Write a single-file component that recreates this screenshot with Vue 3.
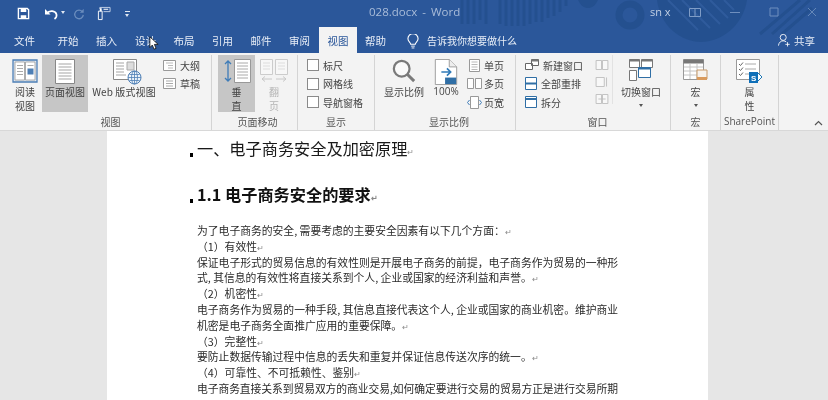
<script setup>
const tabs = [
  { name: '开始', w: 38 },
  { name: '插入', w: 39 },
  { name: '设计', w: 39 },
  { name: '布局', w: 38 },
  { name: '引用', w: 39 },
  { name: '邮件', w: 38 },
  { name: '审阅', w: 39 },
  { name: '视图', w: 38, active: true },
  { name: '帮助', w: 37 }
]

const body = [
  { t: '为了电子商务的安全, 需要考虑的主要安全因素有以下几个方面：', m: true },
  { t: '（1）有效性', m: true },
  { t: '保证电子形式的贸易信息的有效性则是开展电子商务的前提，电子商务作为贸易的一种形' },
  { t: '式, 其信息的有效性将直接关系到个人, 企业或国家的经济利益和声誉。', m: true },
  { t: '（2）机密性', m: true },
  { t: '电子商务作为贸易的一种手段, 其信息直接代表这个人, 企业或国家的商业机密。维护商业' },
  { t: '机密是电子商务全面推广应用的重要保障。', m: true },
  { t: '（3）完整性', m: true },
  { t: '要防止数据传输过程中信息的丢失和重复并保证信息传送次序的统一。', m: true },
  { t: '（4）可靠性、不可抵赖性、鉴别', m: true },
  { t: '电子商务直接关系到贸易双方的商业交易,如何确定要进行交易的贸易方正是进行交易所期', tight: true }
]
</script>

<template>
  <div class="word">
    <header class="titlebar">
      <svg class="pattern" width="828" height="53" viewBox="0 0 828 53">
        <g fill="none" stroke="#24508f">
          <path d="M462 0v24M468 0v24M474 0v24M480 0v20M486 0v24M500 0v24M506 0v26M512 0v26M518 0v26M524 0v26M530 0v24M536 0v22M542 0v22M548 0v18M554 0v16M560 0v12M566 0v6" stroke-width="3" />
          <circle cx="630" cy="15" r="11" stroke-width="7" />
          <path d="M578 0c3 6 6 8 10 8s7-2 10-8z" fill="#24508f" stroke="none" />
          <path d="M657 0c3 26 24 42 44 42s42-16 46-42z" fill="#24508f" stroke="none" />
          <path d="M668 0l30 30M682 0l28 28M696 0l24 24M710 0l18 18M724 0l10 10" stroke="#2f5b9c" stroke-width="2" />
          <path d="M772 34l38-34M782 34l30-26M760 34l40-34" stroke-width="3" />
        </g>
      </svg>
      <div class="qat">
        <svg width="13" height="13" viewBox="0 0 14 14"><path d="M1.500 1.500h9.500l1.500 1.500v9.500h-11z" fill="none" stroke="#fff" stroke-width="1.500" /><path d="M4 2h6v3.500H4zM4 9h6v3H4z" fill="#fff" /></svg>
        <svg class="undo" width="15" height="14" viewBox="0 0 15 14"><path d="M2.500 6.500c3-3.500 9-3 10 1 .4 2-.6 3.500-2 4.500" fill="none" stroke="#fff" stroke-width="1.700" /><path d="M1 2v5.500h5.500z" fill="#fff" /></svg>
        <span class="mini-caret"></span>
        <svg class="redo" width="12" height="12" viewBox="0 0 14 14"><path d="M11 4.500A5 5 0 1 0 12 8" fill="none" stroke="#6a8cbd" stroke-width="1.500" /><path d="M12.500 1v4.500H8z" fill="#6a8cbd" /></svg>
        <svg class="touch" width="14" height="15" viewBox="0 0 15 16"><path d="M1.500 5.500h4v9h-4z" fill="none" stroke="#fff" /><path d="M3 3V1.500h11V6H7" fill="none" stroke="#c5d3e8" /><path d="M3 2.500h2v3H3zM7 3h5v1H7z" fill="#fff" /></svg>
        <span class="more-caret"></span>
      </div>
      <div class="doc-title">028.docx&nbsp;-&nbsp;Word</div>
      <div class="user">sn x</div>
      <div class="win-controls">
        <svg width="12" height="10" viewBox="0 0 12 10"><path d="M.5 1.500h11v8H.5zM6 1.500v8" fill="none" stroke="#7f9cc6" /></svg>
        <svg width="12" height="10" viewBox="0 0 12 10"><path d="M1 5.500h10" stroke="#6f8fbe" /></svg>
        <svg width="10" height="10" viewBox="0 0 10 10"><path d="M1 1h8v8H1z" fill="none" stroke="#6f8fbe" /></svg>
        <svg width="10" height="10" viewBox="0 0 10 10"><path d="M1 1l8 8M9 1l-8 8" stroke="#6487b8" /></svg>
      </div>
    </header>

    <nav class="tabbar">
      <div class="tab file">文件</div>
      <div v-for="tab in tabs" :key="tab.name" class="tab" :class="{ active: tab.active }" :style="{ width: tab.w + 'px' }">{{ tab.name }}</div>
      <svg class="bulb" width="12" height="15" viewBox="0 0 13 16"><path d="M4 11c0-2-3-3-3-6a5.500 5.500 0 0 1 11 0c0 3-3 4-3 6z" fill="none" stroke="#fff" stroke-width="1.200" /><path d="M4.500 13h4M5 15h3" stroke="#fff" /></svg>
      <div class="tell">告诉我你想要做什么</div>
      <div class="share">
        <svg width="13" height="14" viewBox="0 0 15 15"><circle cx="6" cy="4.500" r="3.500" fill="none" stroke="#fff" /><path d="M.5 14c.5-4 3-5.500 5.500-5.500 1.500 0 2.500.5 3.500 1.200M11 10v5M8.500 12.500h5" fill="none" stroke="#fff" /></svg>
        <span>共享</span>
      </div>
    </nav>

    <section class="ribbon">
      <div class="group g-view">
        <div class="group-body">
          <div class="big read">
            <svg width="26" height="24" viewBox="0 0 26 24"><path d="M1 1h24v22H1z" fill="#dfe8f2" stroke="#4e7fb5" stroke-width="1.300" /><path d="M3 3h9.500v18H3zM13.500 3H23v18h-9.500z" fill="#fff" stroke="#9a9a9a" stroke-width=".8" /><path d="M5 6.500h6M5 9.500h6M5 12.500h6M5 15.500h6M15.500 6.500h6" stroke="#aaa" /><path d="M15.500 9.500h6v6h-6z" fill="#4e7fb5" /></svg>
            <span>阅读<br />视图</span>
          </div>
          <div class="big on page-view">
            <svg width="20" height="25" viewBox="0 0 20 25"><path d="M.5.500h19v24H.5z" fill="#fff" stroke="#888" /><path d="M3.500 5h13M3.500 8h13M3.500 11h13M3.500 14h13M3.500 17h13M3.500 20h13" stroke="#a5a5a5" /></svg>
            <span>页面视图</span>
          </div>
          <div class="big web">
            <svg width="29" height="26" viewBox="0 0 29 26"><path d="M.5.500h23v20H.5z" fill="#fff" stroke="#888" /><path d="M3 4h8M3 7h8M3 10h8M3 13h8M3 16h10" stroke="#a5a5a5" /><path d="M14 3h7v8h-7z" fill="#ddd" stroke="#aaa" /><circle cx="21.500" cy="18.500" r="6.500" fill="#eef4fa" stroke="#4e7fb5" /><path d="M15 18.500h13M21.500 12v13M16.500 15.500h10M16.500 21.500h10" stroke="#4e7fb5" stroke-width=".8" /><ellipse cx="21.500" cy="18.500" rx="3" ry="6.500" fill="none" stroke="#4e7fb5" stroke-width=".8" /></svg>
            <span>Web 版式视图</span>
          </div>
          <div class="small-col outline-col">
            <div class="small"><svg width="13" height="11" viewBox="0 0 13 11"><path d="M.5.500h12v10H.5z" fill="#fff" stroke="#999" /><path d="M3 3h7M5 5.500h5M5 8h5" stroke="#bbb" /></svg>大纲</div>
            <div class="small"><svg width="13" height="11" viewBox="0 0 13 11"><path d="M.5.500h12v10H.5z" fill="#fff" stroke="#999" /><path d="M3 3h7M3 5.500h7M3 8h7" stroke="#aaa" /></svg>草稿</div>
          </div>
        </div>
        <div class="group-label">视图</div>
      </div>

      <div class="group g-move">
        <div class="group-body">
          <div class="big on vertical">
            <svg width="28" height="24" viewBox="0 0 28 24"><path d="M11.500.500h16v23h-16z" fill="#fff" stroke="#999" /><path d="M14 4h11M14 7h11M14 10h11M14 13h11M14 16h11M14 19h11" stroke="#aaa" /><path d="M5 2v20M2 5l3-3 3 3M2 19l3 3 3-3" fill="none" stroke="#3f7cb8" stroke-width="1.300" /></svg>
            <span>垂<br />直</span>
          </div>
          <div class="big flip">
            <svg width="28" height="24" viewBox="0 0 28 24"><path d="M.5.500h12v15H.5zM15.500.500h12v15h-12z" fill="#f7f7f7" stroke="#ccc" /><path d="M3 4h7M3 7h7M3 10h7M18 4h7M18 7h7M18 10h7" stroke="#ddd" /><path d="M2 20h10M5 17.500L2 20l3 2.500M26 20H16M23 17.500l3 2.500-3 2.500" fill="none" stroke="#c8c8c8" /></svg>
            <span>翻<br />页</span>
          </div>
        </div>
        <div class="group-label">页面移动</div>
      </div>

      <div class="group g-show">
        <div class="group-body checks">
          <label class="check"><i></i>标尺</label>
          <label class="check"><i></i>网格线</label>
          <label class="check"><i></i>导航窗格</label>
        </div>
        <div class="group-label">显示</div>
      </div>

      <div class="group g-zoom">
        <div class="group-body">
          <div class="big zoom">
            <svg width="24" height="24" viewBox="0 0 26 26"><circle cx="10.500" cy="10.500" r="8.500" fill="#fafafa" stroke="#7a7a7a" stroke-width="2.400" /><path d="M16.500 16.500l7.500 7.500" stroke="#7a7a7a" stroke-width="3.200" /></svg>
            <span>显示比例</span>
          </div>
          <div class="big hundred">
            <svg width="24" height="26" viewBox="0 0 24 28"><path d="M.5.500h15l8 8v19H.5z" fill="#fff" stroke="#999" /><path d="M15.500.500v8h8" fill="#eee" stroke="#999" /><path d="M7 14h10M13 10l4 4-4 4" fill="none" stroke="#2f7ab8" stroke-width="1.800" /><path d="M11 20h12v7H11z" fill="#2f6ea5" /></svg>
            <span>100%</span>
          </div>
          <div class="small-col zoom-col">
            <div class="small"><svg width="11" height="13" viewBox="0 0 11 13"><path d="M.5.500h10v12H.5z" fill="#fff" stroke="#999" /><path d="M2.500 3h6M2.500 5.500h6M2.500 8h6M2.500 10.500h6" stroke="#bbb" /></svg>单页</div>
            <div class="small"><svg width="15" height="11" viewBox="0 0 15 11"><path d="M.5.500h6v10h-6zM8.500.500h6v10h-6z" fill="#fff" stroke="#999" /></svg>多页</div>
            <div class="small"><svg width="15" height="13" viewBox="0 0 15 13"><path d="M3.500.500h8v12h-8z" fill="#fff" stroke="#999" /><path d="M2.500 4L.5 6.500 2.500 9M12.500 4l2 2.500-2 2.500" fill="none" stroke="#3f7cb8" /></svg>页宽</div>
          </div>
        </div>
        <div class="group-label">显示比例</div>
      </div>

      <div class="group g-window">
        <div class="group-body">
          <div class="small-col window-col">
            <div class="small"><svg width="14" height="13" viewBox="0 0 14 13"><path d="M.5 4.500h7v6h-7zM6.500.500h7v6h-7z" fill="#fff" stroke="#666" /><path d="M6.500.500h7v2h-7z" fill="#777" /></svg>新建窗口</div>
            <div class="small"><svg width="12" height="13" viewBox="0 0 12 13"><path d="M.5.500h11v12H.5z" fill="#fff" stroke="#2f6ea5" /><path d="M.5 6.500h11" stroke="#2f6ea5" stroke-width="2" /></svg>全部重排</div>
            <div class="small"><svg width="12" height="12" viewBox="0 0 12 12"><path d="M.5.500h11v11H.5z" fill="#fff" stroke="#2f6ea5" /><path d="M.5 3h11" stroke="#2f6ea5" stroke-width="2" /></svg>拆分</div>
          </div>
          <div class="icon-col">
            <svg width="14" height="11" viewBox="0 0 14 11"><path d="M.5.500h6v10h-6zM7.500.500h6v10h-6z" fill="#f8f8f8" stroke="#bdbdbd" /></svg>
            <svg width="14" height="11" viewBox="0 0 14 11"><path d="M.5.500h9v10h-9zM12 .5v10" fill="#f8f8f8" stroke="#bdbdbd" /></svg>
            <svg width="14" height="11" viewBox="0 0 14 11"><path d="M.5.500h6v10h-6zM7.500.500h6v10h-6z" fill="#f8f8f8" stroke="#bdbdbd" /><path d="M3 5.500h8" stroke="#bdbdbd" /></svg>
          </div>
          <div class="big switch">
            <svg width="24" height="22" viewBox="0 0 24 22"><path d="M.5.500h10v8H.5zM12.500.500h11v8h-11zM.5 11.500h7v10h-7z" fill="#fff" stroke="#777" /><path d="M.5.500h10v2H.5zM12.500.500h11v2h-11z" fill="#777" /><path d="M9.500 8.500h12v10h-12z" fill="#fff" stroke="#2f6ea5" /><path d="M9.500 8.500h12v2h-12z" fill="#2f6ea5" /></svg>
            <span>切换窗口</span>
            <em class="caret"></em>
          </div>
        </div>
        <div class="group-label">窗口</div>
      </div>

      <div class="group g-macro">
        <div class="group-body">
          <div class="big macro">
            <svg width="25" height="22" viewBox="0 0 25 22"><path d="M.5.500h20v20H.5z" fill="#fff" stroke="#999" /><path d="M.5.500h20v4H.5z" fill="#777" /><path d="M1 8h19M1 12h19M1 16h19M7 5v15M14 5v15" stroke="#c4c4c4" /><path d="M14 11h10v9H14z" fill="#f7f2ec" stroke="#c79a6b" /><path d="M14 18h10v3H14z" fill="#d99a5c" /></svg>
            <span>宏</span>
            <em class="caret"></em>
          </div>
        </div>
        <div class="group-label">宏</div>
      </div>

      <div class="group g-sp">
        <div class="group-body">
          <div class="big props">
            <svg width="27" height="25" viewBox="0 0 27 25"><path d="M.5.500h23v20H.5z" fill="#fff" stroke="#999" /><path d="M3 5l1.500 1.500L7 3.500M3 10l1.500 1.500L7 8.500M3 15l1.500 1.500L7 13.500" fill="none" stroke="#666" /><path d="M9 5h11M9 10h11M9 15h5" stroke="#aaa" /><path d="M21 13l5 5-5 5z" fill="#fff" stroke="#1f77b4" /><path d="M13 13h9v11h-9z" fill="#0f6fb8" /></svg>
            <b class="sp-s">S</b>
            <span>属<br />性</span>
          </div>
        </div>
        <div class="group-label sp-label">SharePoint</div>
      </div>

      <svg class="collapse" width="9" height="6" viewBox="0 0 9 6"><path d="M1 5l3.500-3.500L8 5" fill="none" stroke="#555" stroke-width="1.200" /></svg>
    </section>

    <main class="workspace">
      <article class="page">
        <h1 class="h1"><i class="mark"></i>一、电子商务安全及加密原理<span class="ret">↵</span></h1>
        <h2 class="h2"><i class="mark"></i>1.1 电子商务安全的要求<span class="ret">↵</span></h2>
        <div class="text">
          <p v-for="(line, i) in body" :key="i" :class="{ tight: line.tight }">{{ line.t }}<span v-if="line.m" class="ret">↵</span></p>
        </div>
      </article>
    </main>

    <svg class="cursor" width="10" height="14" viewBox="0 0 12 17"><path d="M1 1v13l3-3 2 5 2.500-1-2-4.800H11z" fill="#fff" stroke="#111" /></svg>
  </div>
</template>

<style>
html, body { margin: 0; background: #e6e6e6; }
</style>

<style scoped>
.word {
  position: relative;
  width: 828px;
  height: 400px;
  overflow: hidden;
  font-family: "Noto Sans CJK SC", "Liberation Sans", sans-serif;
  background: #e6e6e6;
  filter: blur(0.35px);
}

.titlebar {
  position: relative;
  display: flex;
  align-items: center;
  height: 27px;
  background: #2b579a;
  color: #fff;
}

.pattern { position: absolute; left: 0; top: 0; z-index: 1; pointer-events: none; }

.qat {
  position: relative;
  z-index: 2;
  display: flex;
  align-items: center;
  padding-left: 17px;
  width: 380px;
  box-sizing: border-box;
  height: 25px;
}

.undo { margin-left: 14px; }
.mini-caret {
  width: 0;
  height: 0;
  margin: 0 0 3px 2px;
  border-left: 2.500px solid transparent;
  border-right: 2.500px solid transparent;
  border-top: 3px solid #dfe7f2;
}
.redo { margin-left: 8px; }
.touch { margin-left: 12px; }
.more-caret {
  width: 5px;
  height: 4px;
  margin-left: 14px;
  border-top: 1px solid #dfe7f2;
  position: relative;
}
.more-caret::after {
  content: '';
  position: absolute;
  left: 0;
  top: 2px;
  border-left: 2.500px solid transparent;
  border-right: 2.500px solid transparent;
  border-top: 3px solid #dfe7f2;
}

.doc-title {
  position: absolute;
  z-index: 2;
  left: 369px;
  top: 3px;
  font: 11.500px/18px "Open Sans", sans-serif;
  word-spacing: 2px;
  color: #a9bcd9;
}

.user {
  position: absolute;
  z-index: 2;
  left: 650px;
  top: 3px;
  font: 11px/18px "Open Sans", sans-serif;
  color: #c2d0e4;
}

.win-controls {
  position: absolute;
  z-index: 2;
  left: 689px;
  top: 7px;
  display: flex;
  gap: 28px;
  align-items: center;
}

.tabbar {
  position: relative;
  display: flex;
  align-items: flex-end;
  height: 26px;
  background: #2b579a;
  color: #e8eef7;
  font-size: 10.500px;
}

.tab {
  position: relative;
  z-index: 2;
  height: 26px;
  line-height: 27px;
  text-align: center;
  flex: none;
  box-sizing: border-box;
}

.tab.file { width: 49px; }
.tab.active { background: #f3f3f3; color: #2b579a; }

.bulb { position: relative; z-index: 2; margin: 0 0 4px 13px; flex: none; }
.tell { position: relative; z-index: 2; margin-left: 8px; font-size: 10px; line-height: 27px; height: 26px; }

.share {
  position: relative;
  z-index: 2;
  margin-left: auto;
  padding: 0 13px 0 0;
  display: flex;
  align-items: center;
  gap: 3px;
  height: 26px;
}

.ribbon {
  position: relative;
  display: flex;
  height: 78px;
  box-sizing: border-box;
  background: #f3f3f3;
  border-bottom: 1px solid #d8d8d8;
  color: #444;
  font-size: 10px;
}

.group {
  flex: none;
  display: flex;
  flex-direction: column;
  height: 75px;
  margin-top: 2px;
  box-sizing: border-box;
  border-right: 1px solid #d4d4d4;
}

.group-body {
  flex: 1;
  display: flex;
  min-height: 0;
}

.group-label {
  height: 16px;
  text-align: center;
  font-size: 10px;
  line-height: 15px;
  color: #555;
}

.sp-label { font-family: "Open Sans", sans-serif; white-space: nowrap; }

.g-view { width: 212px; padding-left: 10px; }
.g-move { width: 86px; padding-left: 6px; }
.g-show { width: 77px; }
.g-zoom { width: 141px; padding-left: 8px; }
.g-window { width: 155px; padding-left: 9px; }
.g-macro { width: 50px; }
.g-sp { width: 58px; }

.big {
  position: relative;
  flex: none;
  display: grid;
  grid-template-rows: 26px auto auto;
  justify-items: center;
  align-content: start;
  height: 57px;
  padding-top: 4px;
  box-sizing: border-box;
  line-height: 13.500px;
  text-align: center;
  white-space: nowrap;
}

.big.on { background: #c6c6c6; }

.read { width: 30px; }
.page-view { width: 46px; margin-left: 2px; }
.web { width: 68px; margin-left: 2px; }
.web svg { margin-left: 6px; }
.web span { font-size: 10px; letter-spacing: .1px; }
.vertical { width: 37px; }
.flip { width: 32px; margin-left: 3px; color: #b5b5b5; }
.zoom { width: 42px; }
.hundred { width: 28px; margin-left: 7px; font-family: "Open Sans", sans-serif; }
.switch { width: 44px; margin-left: 6px; }
.macro { width: 100%; }
.props { width: 100%; }

.sp-s {
  position: absolute;
  left: 30px;
  top: 19px;
  font: bold 8px/10px "Liberation Sans", sans-serif;
  color: #fff;
}

.caret {
  width: 0;
  height: 0;
  margin-top: 5px;
  border-left: 2.500px solid transparent;
  border-right: 2.500px solid transparent;
  border-top: 3px solid #555;
}

.small-col {
  flex: none;
  display: flex;
  flex-direction: column;
  padding-top: 1px;
}

.small {
  display: flex;
  align-items: center;
  gap: 4px;
  height: 18.500px;
  white-space: nowrap;
}

.small svg { flex: none; }

.outline-col { margin-left: 5px; }
.zoom-col { margin-left: 7px; }
.zoom-col .small { gap: 2px; }
.zoom-col .small svg { width: 15px; }
.window-col { width: 67px; }

.icon-col {
  flex: none;
  display: flex;
  flex-direction: column;
  align-items: center;
  gap: 7px;
  width: 20px;
  padding: 5px 0 0;
  border-right: 1px solid #e2e2e2;
  height: 44px;
}

.checks {
  flex-direction: column;
  padding: 1px 0 0 9px;
}

.check {
  display: flex;
  align-items: center;
  gap: 4px;
  height: 18.500px;
  white-space: nowrap;
}

.check i {
  width: 10px;
  height: 10px;
  background: #fff;
  border: 1px solid #8a8a8a;
}

.collapse { position: absolute; left: 814px; top: 67px; }

.workspace {
  height: 270px;
  padding-left: 107px;
  overflow: hidden;
}

.page {
  width: 601px;
  height: 100%;
  box-sizing: border-box;
  background: #fff;
  padding: 5px 90px 0;
  color: #2a2a2a;
}

.h1, .h2 {
  position: relative;
  margin: 0;
  font-size: 16.200px;
  font-weight: 400;
  line-height: 24px;
  height: 24px;
  white-space: nowrap;
  color: #1a1a1a;
}

.h2 { margin-top: 21.500px; font-weight: 700; color: #111; }

.mark {
  position: absolute;
  left: -7px;
  top: 17px;
  width: 3px;
  height: 4px;
  background: #000;
}

.text {
  margin-top: 17.500px;
  font-size: 10.800px;
  white-space: nowrap;
}

.text p { margin: 0; height: 15.800px; line-height: 15.800px; }
.text p.tight { letter-spacing: -0.08px; }

.ret {
  margin-left: 0;
  font-size: 8px;
  line-height: 0;
  color: #888;
}

.cursor { position: absolute; left: 149px; top: 36px; z-index: 3; }
</style>
